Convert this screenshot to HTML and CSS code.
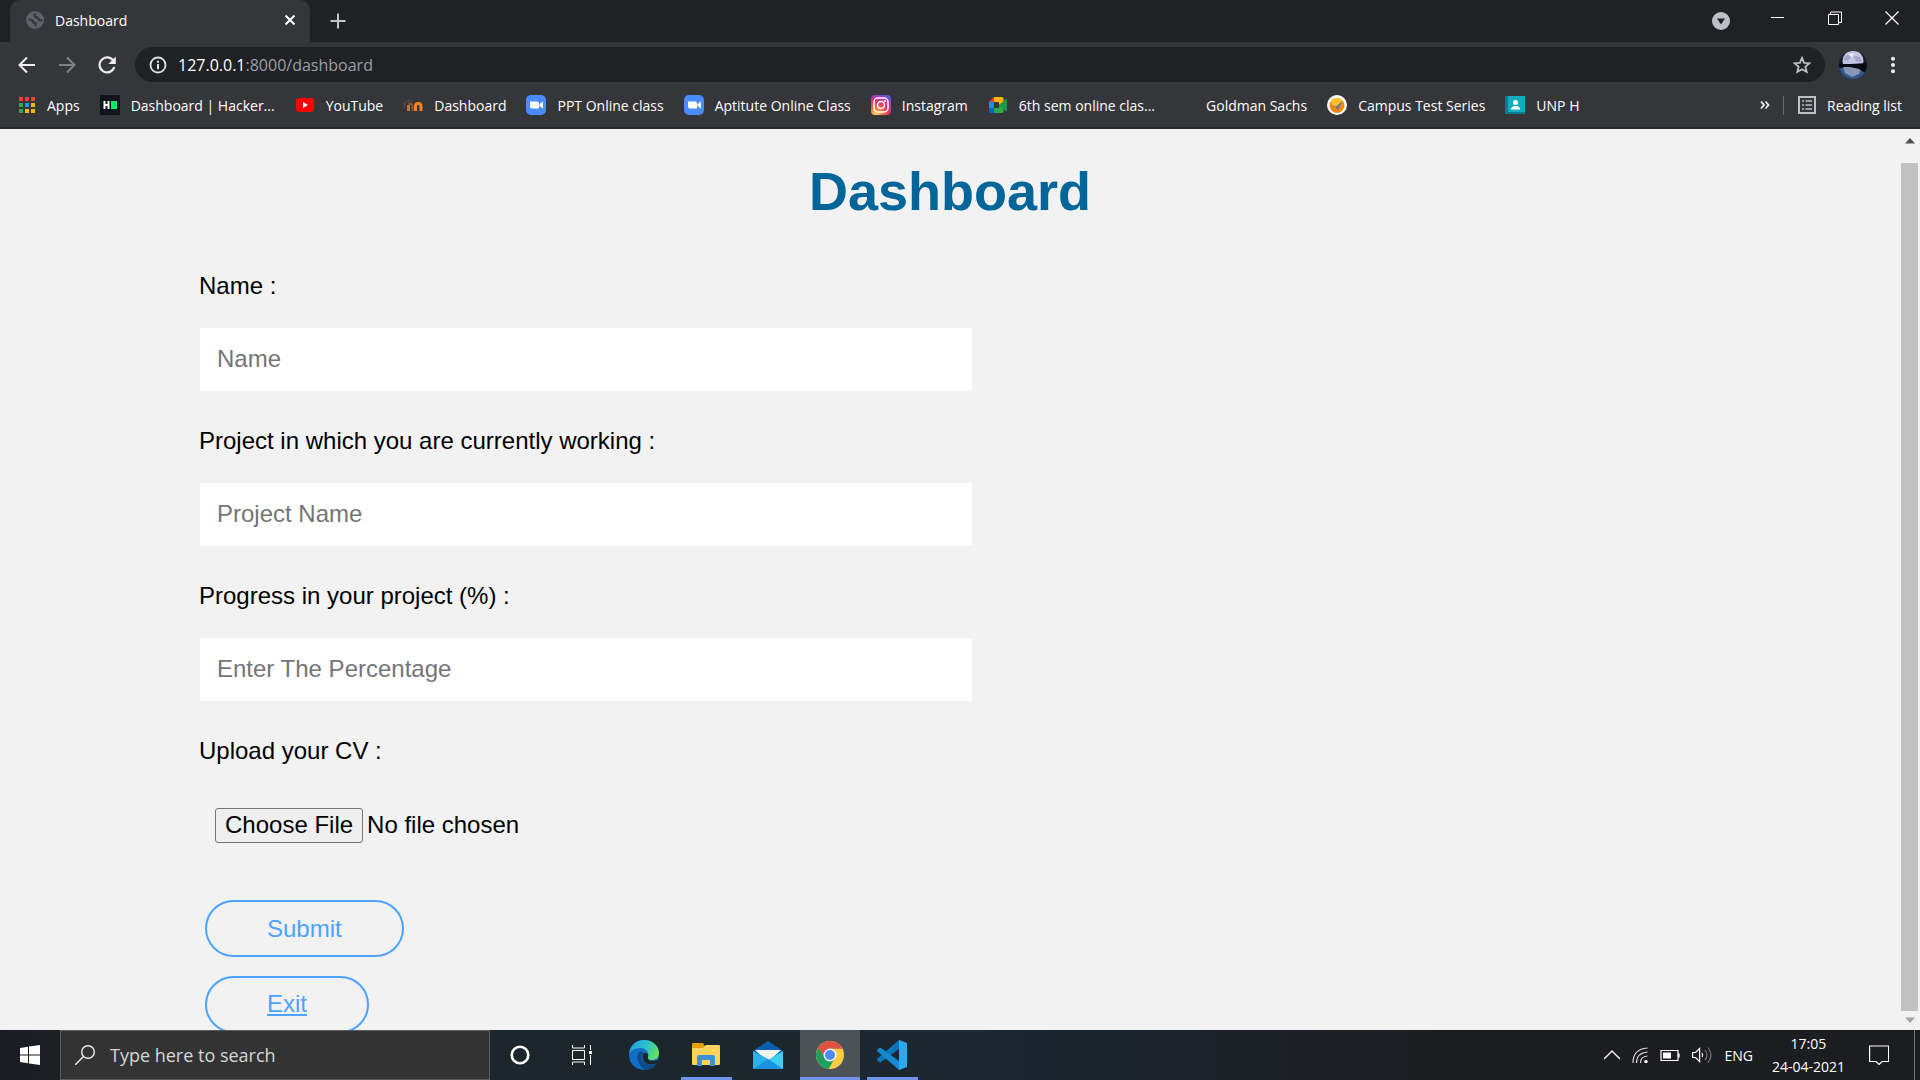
FILE: index.html
```
<!DOCTYPE html>
<html lang="en">
<head>
<meta charset="utf-8">
<title>Dashboard</title>
<link rel="stylesheet" href="styles.css">
</head>
<body>
<div class="screen">
  <header class="browser">
    <div class="tabstrip">
      <div class="tab">
        <svg class="i18" viewBox="0 0 18 18"><circle cx="9" cy="9" r="9" fill="#5f6368"/><path d="M2.500 8.500q4 0 4.500 2t2.500 1.500V15M9 2.500q-1 3 1 3.500t3 2.500 3 0" stroke="#35363a" stroke-width="2.200" fill="none"/></svg>
        <span class="tab-title">Dashboard</span>
        <button class="plain" aria-label="Close tab"><svg class="i12" viewBox="0 0 12 12"><path d="M1.500 1.500l9 9M10.500 1.500l-9 9" stroke="#fff" stroke-width="2"/></svg></button>
      </div>
      <button class="plain newtab" aria-label="New tab"><svg class="i16" viewBox="0 0 16 16"><path d="M8 0.500v15M0.500 8h15" stroke="#c4c7ca" stroke-width="2"/></svg></button>
      <div class="window-buttons">
        <button class="plain winbtn low" aria-label="Search tabs"><svg class="i18" viewBox="0 0 18 18"><circle cx="9" cy="9" r="9" fill="#bdc1c6"/><path d="M5 6.500h8l-4 6z" fill="#202124"/></svg></button>
        <button class="plain winbtn" aria-label="Minimize"><svg class="i14" viewBox="0 0 14 14"><path d="M0 6.500h13" stroke="#fff"/></svg></button>
        <button class="plain winbtn" aria-label="Restore"><svg class="i14" viewBox="0 0 14 14"><path d="M.5 3.500h10v10H.5zM2.500 3.500v-2.500h11v10.500h-3" fill="none" stroke="#fff"/></svg></button>
        <button class="plain winbtn" aria-label="Close"><svg class="i14" viewBox="0 0 14 14"><path d="M.5.5l13 13M13.500.5l-13 13" stroke="#fff" stroke-width="1.200"/></svg></button>
      </div>
    </div>
    <div class="toolbar">
      <button class="plain nav" aria-label="Back"><svg class="i18" viewBox="0 0 18 18"><path d="M17 9H2M9 1.500L1.500 9 9 16.500" fill="none" stroke="#eee" stroke-width="2"/></svg></button>
      <button class="plain nav" aria-label="Forward"><svg class="i18" viewBox="0 0 18 18"><path d="M1 9h15M9 1.500L16.500 9 9 16.500" fill="none" stroke="#7f8185" stroke-width="2"/></svg></button>
      <button class="plain nav" aria-label="Reload"><svg class="i18" viewBox="0 0 18 18"><path d="M15.500 5A7.500 7.500 0 1 0 16.300 11" fill="none" stroke="#eee" stroke-width="2.200"/><path d="M17.800.5V8h-7.500z" fill="#eee"/></svg></button>
      <div class="omnibox">
        <svg class="i18" viewBox="0 0 18 18"><circle cx="9" cy="9" r="7.500" fill="none" stroke="#dfe1e4" stroke-width="1.800"/><path d="M9 8v5.300M9 4.800v2" stroke="#dfe1e4" stroke-width="2"/></svg>
        <div class="url" role="textbox" aria-label="Address" tabindex="0">127.0.0.1<span class="path">:8000/dashboard</span></div>
        <button class="plain" aria-label="Bookmark this tab"><svg class="i18" viewBox="0 0 18 18"><path d="M9 1.800l2.100 5 5.400.4-4.100 3.500 1.300 5.300L9 13.200 4.300 16l1.300-5.300-4.100-3.500 5.400-.4z" fill="none" stroke="#bdc1c6" stroke-width="1.800"/></svg></button>
      </div>
      <button class="plain avatar" aria-label="Profile"><svg class="i28" viewBox="0 0 28 28"><defs><clipPath id="face"><circle cx="14" cy="14" r="14"/></clipPath></defs><g clip-path="url(#face)"><path fill="#151b2e" d="M0 0h28v28H0z"/><circle cx="14" cy="10" r="10.500" fill="#c3c3e4"/><path d="M5 8c2-4 5-5 8-5l-2 5-4 2zM15 5l6 1 2 5-6-1z" fill="#a2a3cb"/><path d="M9 3l6-1-2 5z" fill="#e8e9f8"/><path d="M0 17h28v11H0z" fill="#32588f"/><path d="M4 16h19l-3 7-7 3-7-4z" fill="#8797b3"/><path d="M0 13l12 0 16-1v11l-8-5-9-2-11 0z" fill="#080b12"/></g></svg></button>
      <button class="plain" aria-label="Menu"><svg class="i18" viewBox="0 0 18 18"><g fill="#eee"><circle cx="9" cy="2.800" r="2"/><circle cx="9" cy="9" r="2"/><circle cx="9" cy="15.200" r="2"/></g></svg></button>
    </div>
    <nav class="bookmarks">
      <a href="#" class="mark apps"><svg class="i18" viewBox="0 0 18 18"><g><path d="M1 1h4v4H1zM7 1h4v4H7zM13 1h4v4h-4z" fill="#ea4335"/><path d="M1 7h4v4H1zM1 13h4v4H1z" fill="#34a853"/><path d="M7 7h4v4H7z" fill="#2196f3"/><path d="M13 7h4v4h-4zM7 13h4v4H7zM13 13h4v4h-4z" fill="#fbb410"/></g></svg>Apps</a>
      <a href="#" class="mark"><svg class="i20" viewBox="0 0 20 20"><path fill="#0e141e" d="M0 0h20v20H0z"/><path d="M4.500 6v8M8.500 6v8M4.500 10h4" stroke="#fff" stroke-width="2"/><path fill="#00ea64" d="M11 6h6v8h-6z"/></svg>Dashboard | Hacker...</a>
      <a href="#" class="mark"><svg class="i20" viewBox="0 0 20 20"><rect x="1" y="3" width="18" height="14" rx="3" fill="#f00"/><path d="M8 7l5 3-5 3z" fill="#fff"/></svg>YouTube</a>
      <a href="#" class="mark"><svg class="i20" viewBox="0 0 20 20"><path d="M5.500 16v-6" stroke="#c8702a" stroke-width="3"/><path d="M5.500 9.500q3-2 4 1V16" fill="none" stroke="#8b5a34" stroke-width="2"/><path d="M12.500 16v-5q0-2.500 2.700-2.500T18 11v5" fill="none" stroke="#f18226" stroke-width="3"/><path d="M1 7l6-3 4 1-4 3z" fill="#47403d"/><path d="M1.500 7v6" stroke="#62534a"/></svg>Dashboard</a>
      <a href="#" class="mark"><svg class="i20" viewBox="0 0 20 20"><rect width="20" height="20" rx="5" fill="#4a8cff"/><path d="M4 6.500h7q2 0 2 2v5H6q-2 0-2-2zM13.500 9L17 6.500v7L13.500 11z" fill="#fff"/></svg>PPT Online class</a>
      <a href="#" class="mark"><svg class="i20" viewBox="0 0 20 20"><rect width="20" height="20" rx="5" fill="#4a8cff"/><path d="M4 6.500h7q2 0 2 2v5H6q-2 0-2-2zM13.500 9L17 6.500v7L13.500 11z" fill="#fff"/></svg>Aptitute Online Class</a>
      <a href="#" class="mark"><svg class="i20" viewBox="0 0 20 20"><defs><radialGradient id="insta" cx=".25" cy="1" r="1.100"><stop offset="0" stop-color="#ffdc6b"/><stop offset=".3" stop-color="#fb7b3b"/><stop offset=".6" stop-color="#e1316f"/><stop offset=".85" stop-color="#a83bc0"/><stop offset="1" stop-color="#545bd6"/></radialGradient></defs><rect width="20" height="20" rx="4" fill="url(#insta)"/><g fill="none" stroke="#fff" stroke-width="1.500"><rect x="3" y="3" width="14" height="14" rx="4"/><circle cx="10" cy="10" r="3.500"/></g><circle cx="14" cy="6" r="1" fill="#fff"/></svg>Instagram</a>
      <a href="#" class="mark"><svg class="i20" viewBox="0 0 20 20"><path d="M1 7l5-5v5z" fill="#ea4335"/><path d="M1 7h5v6H1z" fill="#2684fc"/><path d="M1 13h5v5H2.500Q1 18 1 16.500z" fill="#0066da"/><path d="M6 2h8q1.500 0 1.500 1.500V7L11 10V7H6z" fill="#ffba00"/><path d="M6 13h5v-3l4.500 3v3.500q0 1.500-1.500 1.500H6z" fill="#2fa850"/><path d="M11 10l7-6q1-.5 1 .5v11q0 1-1 .5z" fill="#23984c"/></svg>6th sem online clas...</a>
      <a href="#" class="mark"><span class="i20"></span>Goldman Sachs</a>
      <a href="#" class="mark"><svg class="i20" viewBox="0 0 20 20"><circle cx="10" cy="10" r="10" fill="#fff"/><circle cx="10" cy="10.500" r="7.500" fill="#f78613"/><path d="M4 5q6-5 12 1l-6 7-5-3z" fill="#ffc12d"/><path d="M3 9.500l6 2 7-6-5.500 10-1.500-3z" fill="#6b7390"/></svg>Campus Test Series</a>
      <a href="#" class="mark"><svg class="i20" viewBox="0 0 20 20"><path fill="#12aebe" d="M0 1h20v18H0z"/><path fill="#087d91" d="M0 1h3v18H0zM0 17h20v2H0z"/><circle cx="10.500" cy="7.500" r="2.500" fill="#fff"/><path d="M6 14.500q0-3.500 4.500-3.500t4.500 3.500z" fill="#fff"/></svg>UNP H</a>
      <div class="marks-end">
        <button class="plain more" aria-label="More bookmarks"><svg class="i12" viewBox="0 0 12 12"><path d="M2 2.500L5 6 2 9.500M6.500 2.500l3 3.500-3 3.500" fill="none" stroke="#eee" stroke-width="1.800"/></svg></button>
        <a href="#" class="mark reading"><svg class="i18" viewBox="0 0 18 18"><path d="M1 1h16v16H1z" fill="none" stroke="#bdc1c6" stroke-width="2"/><path d="M4 5h2M4 9h2M4 13h2M7.500 5H14M7.500 9H14M7.500 13H14" stroke="#bdc1c6" stroke-width="1.600"/></svg>Reading list</a>
      </div>
    </nav>
  </header>

  <div class="viewport">
    <main class="page">
      <h1>Dashboard</h1>
      <form class="form">
        <label for="name">Name :</label>
        <input class="field" id="name" type="text" placeholder="Name">
        <label for="project">Project in which you are currently working :</label>
        <input class="field" id="project" type="text" placeholder="Project Name">
        <label for="progress">Progress in your project (%) :</label>
        <input class="field" id="progress" type="text" placeholder="Enter The Percentage">
        <label for="cv">Upload your CV :</label>
        <input class="file" id="cv" type="file">
        <button class="pill" type="submit">Submit</button>
        <a class="pill" href="#">Exit</a>
      </form>
    </main>
    <div class="scrollbar">
      <svg class="arrow" viewBox="0 0 10 6"><path d="M0 5.500h10L5 0z" fill="#505050"/></svg>
      <div class="thumb"></div>
      <svg class="arrow" viewBox="0 0 10 6"><path d="M0 .5h10L5 6z" fill="#a3a3a3"/></svg>
    </div>
  </div>

  <footer class="taskbar">
    <button class="plain start" aria-label="Start"><svg class="i20" viewBox="0 0 20 20"><path d="M0 3l8-1.200V9.500H0zM9 1.600L20 0v9.500H9zM0 10.500h8v7.700L0 17zM9 10.500h11V20L9 18.400z" fill="#fff"/></svg></button>
    <label class="search"><svg class="i20" viewBox="0 0 20 20"><circle cx="13" cy="7" r="6.300" fill="none" stroke="#eee" stroke-width="1.400"/><path d="M8.500 11.500L0 20" stroke="#eee" stroke-width="1.400"/></svg><input type="text" placeholder="Type here to search" aria-label="Type here to search"></label>
    <div class="tasks">
      <button class="plain task" aria-label="Cortana"><svg class="i20" viewBox="0 0 20 20"><circle cx="10" cy="10" r="8.300" fill="none" stroke="#fff" stroke-width="2.600"/></svg></button>
      <button class="plain task" aria-label="Task view"><svg class="i20" viewBox="0 0 20 20"><path d="M.5 5.500h12v9H.5zM.5 0v3h12V0M.5 20v-3h12v3M18.500 0v5M18.500 10v10" fill="none" stroke="#fff"/><path d="M17 6h3v3h-3z" fill="#fff"/></svg></button>
      <button class="plain task" aria-label="Edge"><svg class="i30" viewBox="0 0 30 30"><defs><linearGradient id="eg" x1="0" y1=".3" x2="1" y2=".6"><stop offset="0" stop-color="#1e9fe0"/><stop offset=".55" stop-color="#2cc3c9"/><stop offset="1" stop-color="#6ce458"/></linearGradient></defs><circle cx="15" cy="15" r="15" fill="#0f6fc4"/><path d="M0 14C1 5 7 0 15 0c9 0 15 6 15 13 0 5-4 7-7 7-4 0-5-2-4-4 1-5-3-8-7-8C6 8 1 11 0 14z" fill="url(#eg)"/><path d="M11 11C6 15 8 26 17 30c5 0 9-3 11-7-5 3-13 2-15-4-1-3 0-5 2-6z" fill="#114a8b"/><path d="M15 13c4 0 5 2 4 4-1 4 5 5 11 2.500V22l-2 1c-6 3-13 1-14-4-1-3 0-5 1-6z" fill="#1e262b"/></svg></button>
      <button class="plain task open" aria-label="File Explorer"><svg class="i30" viewBox="0 0 30 30"><path d="M1 4q0-1 1-1h10l2 3v5H1z" fill="#e2a009"/><path d="M1 8h11l3-3h13q1 0 1 1v18q0 1-1 1H2q-1 0-1-1z" fill="#ffd35c"/><path d="M6 26V17q0-2 2-2h14q2 0 2 2v9h-5v-6h-8v6z" fill="#3a93dc"/></svg></button>
      <button class="plain task" aria-label="Mail"><svg class="i30" viewBox="0 0 30 30"><path d="M0 11L15 1l15 10v4H0z" fill="#0a5fae"/><path d="M2 10h26L15 22z" fill="#f4f4f4"/><path d="M0 11l15 8v10H0z" fill="#28b4ea"/><path d="M30 11v18H0z" fill="#3fcdf5"/><path d="M0 29l15-10 15 10z" fill="#1c94df"/></svg></button>
      <button class="plain task open active" aria-label="Chrome"><svg class="i28" viewBox="0 0 28 28"><circle cx="14" cy="14" r="14" fill="#ffce44"/><path d="M14 14L1.900 7A14 14 0 0 0 12.500 27.900L19 17z" fill="#1aa15f"/><path d="M1.900 7a14 14 0 0 1 24.500.7H14L9 17z" fill="#de5145"/><circle cx="14" cy="14" r="6.500" fill="#f4f4f4"/><circle cx="14" cy="14" r="5" fill="#4c8bf5"/></svg></button>
      <button class="plain task open" aria-label="Visual Studio Code"><svg class="i30" viewBox="0 0 30 30"><path d="M22 0l8 3v24l-8 3z" fill="#29a9f2"/><path d="M22 0v9L4 22q-1 .7-2 0l-1.500-1.500q-1-1 0-2z" fill="#0d75ba"/><path d="M22 30v-9L4 8Q3 7.300 2 8L.5 9.500q-1 1 0 2z" fill="#1589d1"/></svg></button>
    </div>
    <div class="tray">
      <svg class="i16" viewBox="0 0 16 16"><path d="M0 12l8-8 8 8" fill="none" stroke="#eee" stroke-width="1.500"/></svg>
      <svg class="i16" viewBox="0 0 16 16"><g fill="none" stroke="#ddd" stroke-width="1.200"><path d="M1 16Q1 2 15.500 1M4.500 16q0-10 11-11M8.500 16q0-6.500 7-7"/></g><circle cx="14" cy="14.500" r="1.700" fill="#fff"/></svg>
      <svg class="i20" viewBox="0 0 20 20"><path d="M1 5.500h17v10H1zM19 8.500v4" fill="none" stroke="#fff" stroke-width="1.200"/><path d="M3 7.500h8v6H3z" fill="#fff"/></svg>
      <svg class="i20" viewBox="0 0 20 20"><path d="M.6 7.500h3l4-4v13l-4-4h-3z" fill="none" stroke="#fff" stroke-width="1.200"/><path d="M10 8q1.500 2 0 4" fill="none" stroke="#fff" stroke-width="1.200"/><path d="M13 5q4 5 0 10M16 2.500q6 7.500 0 15" fill="none" stroke="#777" stroke-width="1.200"/></svg>
      <span>ENG</span>
      <div class="clock"><time>17:05</time><time>24-04-2021</time></div>
      <svg class="i20" viewBox="0 0 20 20"><path d="M.6 1h19v15.500h-6.500l-3 3-3-3H.6z" fill="none" stroke="#fff" stroke-width="1.200"/></svg>
      <div class="peek"></div>
    </div>
  </footer>
</div>
</body>
</html>
```
FILE: styles.css
```
* { box-sizing: border-box; }
body {
  margin: 0;
  font-family: "Open Sans", "Noto Sans", sans-serif;
  font-size: 14px;
  color: #fff;
}
svg { display: block; flex: none; }
.i12 { width: 12px; height: 12px; }
.i14 { width: 14px; height: 14px; }
.i16 { width: 16px; height: 16px; }
.i18 { width: 18px; height: 18px; }
.i20 { width: 20px; height: 20px; flex: none; }
.i28 { width: 28px; height: 28px; }
.i30 { width: 30px; height: 30px; }
.plain {
  display: flex;
  align-items: center;
  justify-content: center;
  flex: none;
  padding: 0;
  border: 0;
  background: none;
  color: inherit;
  font: inherit;
}
.screen { display: flex; flex-direction: column; height: 100vh; }

/* Browser chrome */
.browser { flex: none; background: #35363a; border-bottom: 2px solid #28292c; }
.tabstrip { display: flex; align-items: center; height: 42px; padding-left: 10px; background: #202124; }
.tab {
  display: flex;
  align-items: center;
  gap: 11px;
  width: 300px;
  height: 42px;
  padding: 0 14px 2px 16px;
  border-radius: 10px 10px 0 0;
  background: #35363a;
}
.tab-title { flex: 1; }
.newtab { margin-left: 20px; }
.window-buttons { display: flex; align-items: center; align-self: flex-start; margin-left: auto; height: 36px; }
.winbtn { width: 57px; height: 36px; }
.low { padding-top: 6px; }
.toolbar { display: flex; align-items: center; height: 45px; padding: 0 18px; gap: 22px; }
.nav { width: 18px; }
.omnibox {
  display: flex;
  align-items: center;
  flex: 1;
  gap: 11px;
  height: 35px;
  margin-left: -3px;
  margin-right: -8px;
  padding: 0 14px;
  border-radius: 18px;
  background: #202124;
}
.url { flex: 1; font-size: 16px; }
.path { color: #9aa0a6; }
.avatar { margin-right: -5px; }
.bookmarks { display: flex; align-items: center; gap: 20px; height: 40px; padding: 0 18px 4px; }
.mark { display: flex; align-items: center; gap: 11px; flex: none; color: #fff; text-decoration: none; white-space: nowrap; }
.marks-end { display: flex; align-items: center; gap: 12px; margin-left: auto; }
.reading { padding-left: 14px; border-left: 1px solid #6b6c70; }

/* Page content */
.viewport {
  display: flex;
  flex: 1;
  min-height: 0;
  overflow: hidden;
  background: #f2f2f2;
  color: #000;
  font-family: "Liberation Sans", Arial, sans-serif;
  font-size: 24px;
}
.page { flex: 1; min-width: 0; }
h1 { margin: 30px 0 0; font-size: 54px; line-height: 64px; text-align: center; color: #069; }
.form { display: flex; flex-direction: column; align-items: flex-start; padding: 48px 0 0 199px; }
.form label { line-height: 30px; }
.field {
  width: 772px;
  height: 63px;
  margin: 27px 0 35px 1px;
  padding: 0 17px 2px;
  border: 0;
  background: #fff;
  font: inherit;
}
.field::placeholder { color: #757575; }
.file { margin: 42px 0 57px 1px; padding-left: 15px; font: inherit; color: #000; }
.file::file-selector-button {
  height: 35px;
  padding: 0 9px 2px;
  border: 1px solid #767676;
  border-radius: 3px;
  background: #efefef;
  font: inherit;
  color: #000;
}
.pill {
  display: block;
  height: 57px;
  margin: 0 0 19px 6px;
  padding: 0 60px;
  border: 2px solid #4da3ff;
  border-radius: 29px;
  background: none;
  color: #4da3ff;
  font: inherit;
  line-height: 52px;
}
.scrollbar { display: flex; flex-direction: column; align-items: center; width: 20px; padding: 9px 2px 7px 1px; }
.arrow { width: 10px; height: 6px; }
.thumb { flex: 1; width: 17px; margin: 19px 0 6px; background: #c1c1c1; }

/* Taskbar */
.taskbar { display: flex; flex: none; height: 50px; background: linear-gradient(90deg, #1c1d24, #1c262b 25%, #1c2730 50%, #1c1d21 75%); }
.start { width: 60px; }
.search {
  display: flex;
  align-items: center;
  gap: 15px;
  width: 430px;
  padding-left: 14px;
  border: 1px solid #5c5c5c;
  background: #333;
}
.search input { flex: 1; min-width: 0; border: 0; padding: 0; background: none; color: #fff; font: inherit; font-size: 18px; }
.search input::placeholder { color: #d6d6d6; }
.tasks { display: flex; gap: 2px; }
.task { width: 60px; }
.open { background: linear-gradient(#6f93e8, #6f93e8) bottom center / 51px 3px no-repeat; }
.active { background-color: #4c5358; background-size: 100% 3px; }
.tray { display: flex; align-items: center; gap: 12px; margin-left: auto; }
.clock { display: flex; flex-direction: column; align-items: center; margin: 0 12px 0 7px; line-height: 23px; }
.peek { width: 6px; height: 50px; margin-left: 13px; border-left: 1px solid #777; }
```
